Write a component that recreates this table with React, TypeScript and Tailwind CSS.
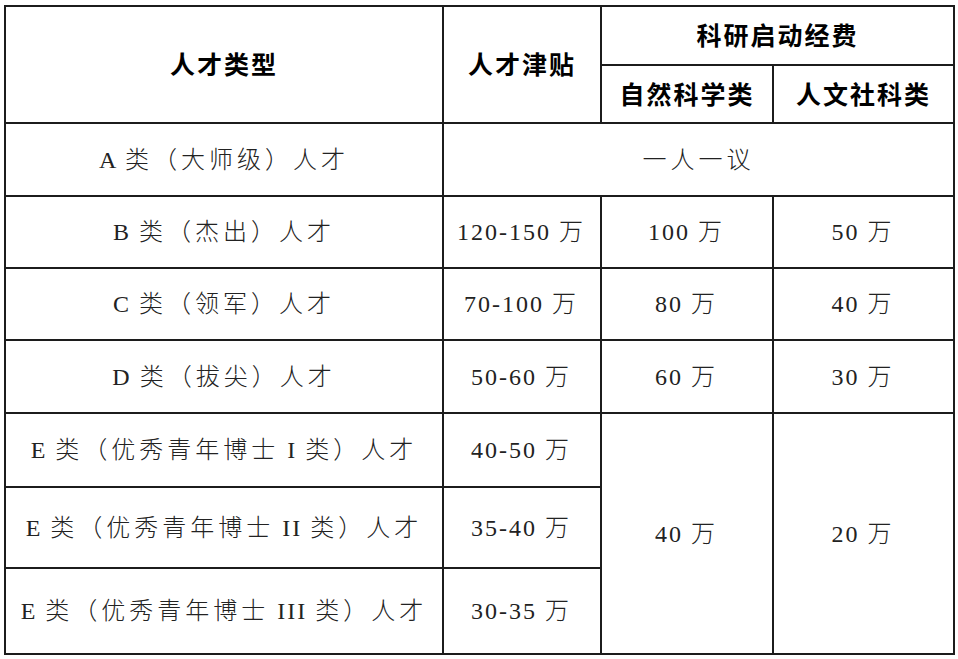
import React from 'react';

const serif = "font-['Liberation_Serif','Noto_Sans_CJK_SC',serif]";
const cell = 'border-2 border-[#1c1c1c] text-center align-middle p-0';

// splits text into latin and CJK runs so each gets its own spacing
const Mixed = ({ text }: { text: string }) => {
  const runs = text.match(/[\x00-\x7F]+|[^\x00-\x7F]+/g) ?? [];
  return (
    <>
      {runs.map((r, i) =>
        /^[\x00-\x7F]+$/.test(r) ? (
          <span key={i} className="tracking-[2px]">{r}</span>
        ) : (
          <span key={i} className="tracking-[4px] font-light">{r}</span>
        )
      )}
    </>
  );
};

const Head = ({ children }: { children: React.ReactNode }) => (
  <span className="font-['Noto_Sans_CJK_SC',sans-serif] font-bold text-[25px] tracking-[2px] text-black">
    {children}
  </span>
);

export default function App() {
  return (
    <div className="w-[958px] h-[659px] bg-white pl-[4px] pt-[5px]">
      <table className={`w-[949px] table-fixed border-collapse text-[24px] text-[#222] leading-none ${serif}`}>
        <colgroup>
          <col className="w-[438px]" />
          <col className="w-[158px]" />
          <col className="w-[172px]" />
          <col className="w-[181px]" />
        </colgroup>
        <tbody>
          <tr className="h-[59px]">
            <td rowSpan={2} className={cell}><Head>人才类型</Head></td>
            <td rowSpan={2} className={cell}><Head>人才津贴</Head></td>
            <td colSpan={2} className={cell}><Head>科研启动经费</Head></td>
          </tr>
          <tr className="h-[58px]">
            <td className={cell}><Head>自然科学类</Head></td>
            <td className={cell}><Head>人文社科类</Head></td>
          </tr>
          <tr className="h-[73px]">
            <td className={cell}><Mixed text="A 类（大师级）人才" /></td>
            <td colSpan={3} className={cell}><Mixed text="一人一议" /></td>
          </tr>
          <tr className="h-[72px]">
            <td className={cell}><Mixed text="B 类（杰出）人才" /></td>
            <td className={cell}><Mixed text="120-150 万" /></td>
            <td className={cell}><Mixed text="100 万" /></td>
            <td className={cell}><Mixed text="50 万" /></td>
          </tr>
          <tr className="h-[72px]">
            <td className={cell}><Mixed text="C 类（领军）人才" /></td>
            <td className={cell}><Mixed text="70-100 万" /></td>
            <td className={cell}><Mixed text="80 万" /></td>
            <td className={cell}><Mixed text="40 万" /></td>
          </tr>
          <tr className="h-[73px]">
            <td className={cell}><Mixed text="D 类（拔尖）人才" /></td>
            <td className={cell}><Mixed text="50-60 万" /></td>
            <td className={cell}><Mixed text="60 万" /></td>
            <td className={cell}><Mixed text="30 万" /></td>
          </tr>
          <tr className="h-[74px]">
            <td className={cell}><Mixed text="E 类（优秀青年博士 I 类）人才" /></td>
            <td className={cell}><Mixed text="40-50 万" /></td>
            <td rowSpan={3} className={cell}><Mixed text="40 万" /></td>
            <td rowSpan={3} className={cell}><Mixed text="20 万" /></td>
          </tr>
          <tr className="h-[81px]">
            <td className={cell}><Mixed text="E 类（优秀青年博士 II 类）人才" /></td>
            <td className={cell}><Mixed text="35-40 万" /></td>
          </tr>
          <tr className="h-[86px]">
            <td className={cell}><Mixed text="E 类（优秀青年博士 III 类）人才" /></td>
            <td className={cell}><Mixed text="30-35 万" /></td>
          </tr>
        </tbody>
      </table>
    </div>
  );
}
